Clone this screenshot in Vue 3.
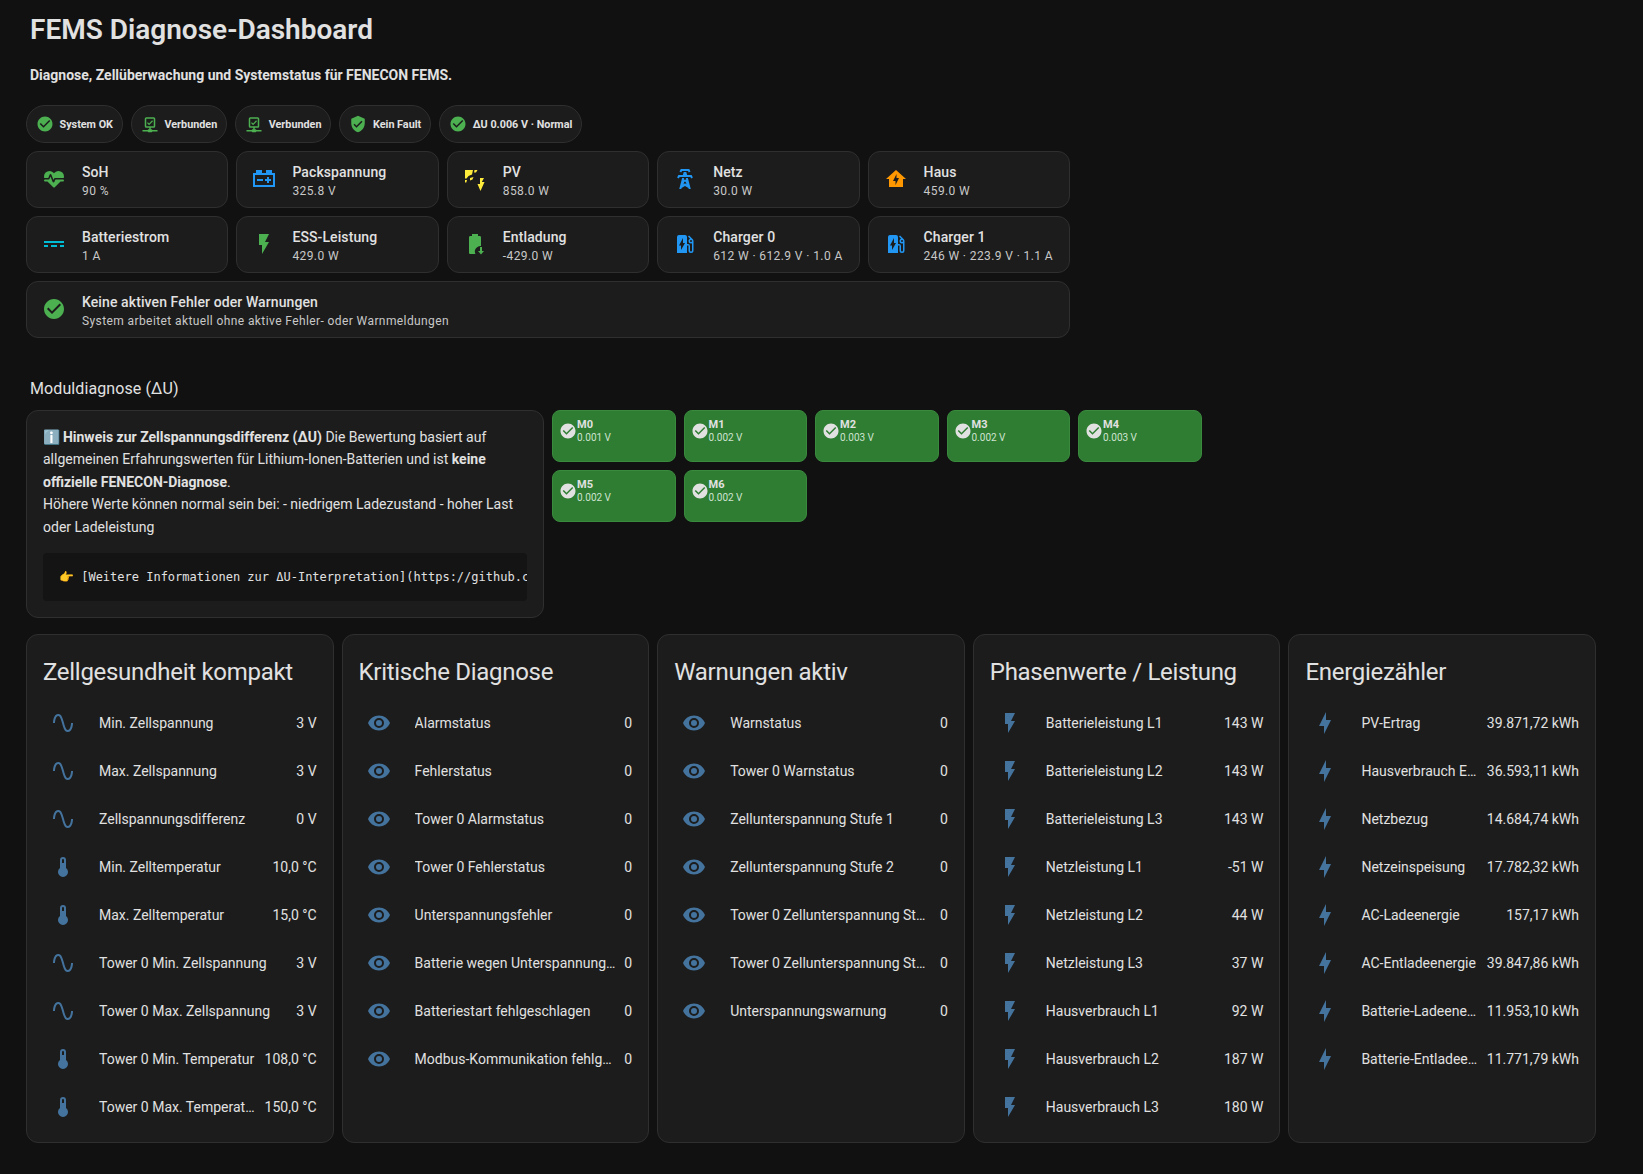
<script setup>
const P = {
  check: 'M12 2C6.5 2 2 6.5 2 12S6.5 22 12 22 22 17.5 22 12 17.5 2 12 2M10 17L5 12L6.41 10.59L10 14.17L17.59 6.58L19 8L10 17Z',
  shield: 'M10,17L6,13L7.41,11.59L10,14.17L16.59,7.58L18,9M12,1L3,5V11C3,16.55 6.84,21.74 12,23C17.16,21.74 21,16.55 21,11V5L12,1Z',
  net: 'M15,20A1,1 0 0,0 14,19H13V17H17A2,2 0 0,0 19,15V5A2,2 0 0,0 17,3H7A2,2 0 0,0 5,5V15A2,2 0 0,0 7,17H11V19H10A1,1 0 0,0 9,20H2V22H9A1,1 0 0,0 10,23H14A1,1 0 0,0 15,22H22V20H15M7,15V5H17V15H7M10.75,13.5L8,10.75L9.16,9.59L10.75,11.18L14.84,7.09L16,8.25L10.75,13.5Z',
  heart: 'M7.5,4A5.5,5.5 0 0,0 2,9.5C2,10 2.09,10.5 2.22,11H6.3L7.57,7.63C7.87,6.83 9.05,6.75 9.43,7.63L11.5,13L12.09,11.58C12.22,11.25 12.57,11 13,11H21.78C21.91,10.5 22,10 22,9.5A5.5,5.5 0 0,0 16.5,4C14.64,4 13,4.93 12,6.34C11,4.93 9.36,4 7.5,4V4M3,12.5A1,1 0 0,0 2,13.5A1,1 0 0,0 3,14.5H5.44L11,20C12,20.9 12,20.9 13,20L18.56,14.5H21A1,1 0 0,0 22,13.5A1,1 0 0,0 21,12.5H13.4L12.47,14.8C12.07,15.81 10.92,15.67 10.55,14.83L8.5,9.5L7.54,11.83C7.39,12.21 7.05,12.5 6.6,12.5H3Z',
  car: 'M4,3V6H1V20H23V6H20V3H14V6H10V3H4M3,8H21V18H3V8M15,10V12H13V14H15V16H17V14H19V12H17V10H15M5,12V14H11V12H5Z',
  solar: 'M2 3H10L9 7.5L5.5 9L3.5 11.5H2ZM11.5 3H14.5L13 5.5H11ZM2 13H4L3.3 15.5H2ZM7 11L10.5 10L9.5 12.5L7 13.5ZM17 11V17H14.5L17.5 24L21.5 15H18.8L21 11Z',
  tower: 'M8.28,5.45L6.5,4.55L7.76,2H16.23L17.5,4.55L15.72,5.44L15,4H9L8.28,5.45M18.62,8H14.09L13.3,5H10.7L9.91,8H5.38L4.1,10.55L5.89,11.44L6.62,10H17.38L18.1,11.45L19.89,10.56L18.62,8M17.77,22H15.7L15.46,21.06L12,18.92L8.55,21.06L8.3,22H6.23L9.12,11H11.19L10.83,12.35L12,13.07L13.18,12.35L12.82,11H14.89L17.77,22M11.1,15.17L10.57,17.21L12,16.32L13.43,17.21L12.9,15.17L12,14.62L11.1,15.17Z',
  home: 'M12 3L2 12H5V20H19V12H22L12 3M11.5 18V14H9L12.5 7V11H15L11.5 18Z',
  dc: 'M2,9H22V11H2V9M2,13H6V15H2V13M9,13H15V15H9V13M18,13H22V15H18V13Z',
  flash: 'M7,2V13H10V22L17,10H13L17,2H7Z',
  bolt: 'M11 15H6L13 1V9H18L11 23V15Z',
  batt: 'M16.67 4H15V2H9V4H7.33C6.6 4 6 4.6 6 5.33V20.67C6 21.4 6.6 22 7.33 22H12.5C12 21 11.6 19.5 12 18C12.7 15.8 15 14 18 14V5.33C18 4.6 17.4 4 16.67 4ZM17 15V19H15L18 22.5L21 19H19V15H17Z',
  ev: 'M19.77,7.23L19.78,7.22L16.06,3.5L15,4.56L17.11,6.67C16.17,7.03 15.5,7.93 15.5,9A2.5,2.5 0 0,0 18,11.5C18.36,11.5 18.69,11.42 19,11.29V18.5A1,1 0 0,1 18,19.5A1,1 0 0,1 17,18.5V14A2,2 0 0,0 15,12H14V5A2,2 0 0,0 12,3H6A2,2 0 0,0 4,5V21H14V13.5H15.5V18.5A2.5,2.5 0 0,0 18,21A2.5,2.5 0 0,0 20.5,18.5V9C20.5,8.31 20.22,7.68 19.77,7.23M18,10A1,1 0 0,1 17,9A1,1 0 0,1 18,8A1,1 0 0,1 19,9A1,1 0 0,1 18,10M8,18V13.5H6L10,6V11H12L8,18Z',
  sine: 'M16.5,21C13.5,21 12.31,16.76 11.05,12.28C10.14,9.04 9,5 7.5,5C4.11,5 4,11.93 4,12H2C2,11.63 2.06,3 7.5,3C10.5,3 11.71,7.25 12.97,11.74C13.83,14.8 15,19 16.5,19C19.94,19 20.03,12.07 20.03,12H22.03C22.03,12.37 21.97,21 16.5,21Z',
  therm: 'M15 13V5A3 3 0 0 0 9 5V13A5 5 0 1 0 15 13M12 4A1 1 0 0 1 13 5V8H11V5A1 1 0 0 1 12 4Z',
  eye: 'M12,9A3,3 0 0,0 9,12A3,3 0 0,0 12,15A3,3 0 0,0 15,12A3,3 0 0,0 12,9M12,17A5,5 0 0,1 7,12A5,5 0 0,1 12,7A5,5 0 0,1 17,12A5,5 0 0,1 12,17M12,4.5C7,4.5 2.73,7.61 1,12C2.73,16.39 7,19.5 12,19.5C17,19.5 21.27,16.39 23,12C21.27,7.61 17,4.5 12,4.5Z',
}

const chips = [
  { i: 'check', t: 'System OK' },
  { i: 'net', t: 'Verbunden' },
  { i: 'net', t: 'Verbunden' },
  { i: 'shield', t: 'Kein Fault' },
  { i: 'check', t: 'ΔU 0.006 V · Normal' },
]

const tiles = [
  { i: 'heart', c: 'green', t: 'SoH', s: '90 %' },
  { i: 'car', c: 'blue', t: 'Packspannung', s: '325.8 V' },
  { i: 'solar', c: 'yellow', t: 'PV', s: '858.0 W' },
  { i: 'tower', c: 'blue', t: 'Netz', s: '30.0 W' },
  { i: 'home', c: 'orange', t: 'Haus', s: '459.0 W' },
  { i: 'dc', c: 'cyan', t: 'Batteriestrom', s: '1 A' },
  { i: 'flash', c: 'green', t: 'ESS-Leistung', s: '429.0 W' },
  { i: 'batt', c: 'green', t: 'Entladung', s: '-429.0 W' },
  { i: 'ev', c: 'blue', t: 'Charger 0', s: '612 W · 612.9 V · 1.0 A' },
  { i: 'ev', c: 'blue', t: 'Charger 1', s: '246 W · 223.9 V · 1.1 A' },
]

const modules = [
  ['M0', '0.001 V'], ['M1', '0.002 V'], ['M2', '0.003 V'], ['M3', '0.002 V'],
  ['M4', '0.003 V'], ['M5', '0.002 V'], ['M6', '0.002 V'],
]

const cards = [
  { title: 'Zellgesundheit kompakt', rows: [
    ['sine', 'Min. Zellspannung', '3 V'],
    ['sine', 'Max. Zellspannung', '3 V'],
    ['sine', 'Zellspannungsdifferenz', '0 V'],
    ['therm', 'Min. Zelltemperatur', '10,0 °C'],
    ['therm', 'Max. Zelltemperatur', '15,0 °C'],
    ['sine', 'Tower 0 Min. Zellspannung', '3 V'],
    ['sine', 'Tower 0 Max. Zellspannung', '3 V'],
    ['therm', 'Tower 0 Min. Temperatur', '108,0 °C'],
    ['therm', 'Tower 0 Max. Temperatur', '150,0 °C'],
  ] },
  { title: 'Kritische Diagnose', rows: [
    ['eye', 'Alarmstatus', '0'],
    ['eye', 'Fehlerstatus', '0'],
    ['eye', 'Tower 0 Alarmstatus', '0'],
    ['eye', 'Tower 0 Fehlerstatus', '0'],
    ['eye', 'Unterspannungsfehler', '0'],
    ['eye', 'Batterie wegen Unterspannung gestoppt', '0'],
    ['eye', 'Batteriestart fehlgeschlagen', '0'],
    ['eye', 'Modbus-Kommunikation fehlgeschlagen', '0'],
  ] },
  { title: 'Warnungen aktiv', rows: [
    ['eye', 'Warnstatus', '0'],
    ['eye', 'Tower 0 Warnstatus', '0'],
    ['eye', 'Zellunterspannung Stufe 1', '0'],
    ['eye', 'Zellunterspannung Stufe 2', '0'],
    ['eye', 'Tower 0 Zellunterspannung Stufe 1', '0'],
    ['eye', 'Tower 0 Zellunterspannung Stufe 2', '0'],
    ['eye', 'Unterspannungswarnung', '0'],
  ] },
  { title: 'Phasenwerte / Leistung', rows: [
    ['flash', 'Batterieleistung L1', '143 W'],
    ['flash', 'Batterieleistung L2', '143 W'],
    ['flash', 'Batterieleistung L3', '143 W'],
    ['flash', 'Netzleistung L1', '-51 W'],
    ['flash', 'Netzleistung L2', '44 W'],
    ['flash', 'Netzleistung L3', '37 W'],
    ['flash', 'Hausverbrauch L1', '92 W'],
    ['flash', 'Hausverbrauch L2', '187 W'],
    ['flash', 'Hausverbrauch L3', '180 W'],
  ] },
  { title: 'Energiezähler', rows: [
    ['bolt', 'PV-Ertrag', '39.871,72 kWh'],
    ['bolt', 'Hausverbrauch Energie', '36.593,11 kWh'],
    ['bolt', 'Netzbezug', '14.684,74 kWh'],
    ['bolt', 'Netzeinspeisung', '17.782,32 kWh'],
    ['bolt', 'AC-Ladeenergie', '157,17 kWh'],
    ['bolt', 'AC-Entladeenergie', '39.847,86 kWh'],
    ['bolt', 'Batterie-Ladeenergie', '11.953,10 kWh'],
    ['bolt', 'Batterie-Entladeenergie', '11.771,79 kWh'],
  ] },
]
</script>

<template>
  <div class="page">
    <h1 class="h1">FEMS Diagnose-Dashboard</h1>
    <p class="sub"><strong>Diagnose, Zellüberwachung und Systemstatus für FENECON FEMS.</strong></p>

    <div class="top">
      <div class="chips">
        <div v-for="(c, n) in chips" :key="n" class="chip">
          <svg class="chip-ic green" viewBox="0 0 24 24"><path :d="P[c.i]" /></svg>
          <span>{{ c.t }}</span>
        </div>
      </div>

      <div class="tiles">
        <div v-for="t in tiles" :key="t.t" class="tile">
          <svg class="ic" :class="t.c" viewBox="0 0 24 24"><path :d="P[t.i]" /></svg>
          <div class="tile-text">
            <div class="tile-title">{{ t.t }}</div>
            <div class="tile-sub">{{ t.s }}</div>
          </div>
        </div>
      </div>

      <div class="tile">
        <svg class="ic green" viewBox="0 0 24 24"><path :d="P.check" /></svg>
        <div class="tile-text">
          <div class="tile-title">Keine aktiven Fehler oder Warnungen</div>
          <div class="tile-sub">System arbeitet aktuell ohne aktive Fehler- oder Warnmeldungen</div>
        </div>
      </div>
    </div>

    <h2 class="section">Moduldiagnose (ΔU)</h2>

    <div class="mod-row">
      <div class="note">
        <div class="note-text">
          <span class="emoji">ℹ️</span> <strong>Hinweis zur Zellspannungsdifferenz (ΔU)</strong> Die Bewertung basiert auf allgemeinen Erfahrungswerten für Lithium-Ionen-Batterien und ist <strong>keine offizielle FENECON-Diagnose</strong>.<br />Höhere Werte können normal sein bei: - niedrigem Ladezustand - hoher Last oder Ladeleistung
        </div>
        <pre class="code"><span class="emoji">👉</span> [Weitere Informationen zur ΔU-Interpretation](https://github.c</pre>
      </div>
      <div class="mods">
        <div v-for="m in modules" :key="m[0]" class="mod">
          <svg class="mod-ic" viewBox="0 0 24 24"><path :d="P.check" /></svg>
          <div>
            <div class="mod-name">{{ m[0] }}</div>
            <div class="mod-val">{{ m[1] }}</div>
          </div>
        </div>
      </div>
    </div>

    <div class="cards">
      <section v-for="c in cards" :key="c.title" class="card">
        <h3 class="card-title">{{ c.title }}</h3>
        <div class="rows">
          <div v-for="r in c.rows" :key="r[1]" class="row">
            <span class="row-ic"><svg viewBox="0 0 24 24"><path :d="P[r[0]]" /></svg></span>
            <span class="row-name">{{ r[1] }}</span>
            <span class="row-val">{{ r[2] }}</span>
          </div>
        </div>
      </section>
    </div>
  </div>
</template>

<style>
html, body { background: #111111; }
</style>

<style scoped>
.page {
  box-sizing: border-box;
  width: 1643px;
  height: 1174px;
  overflow: hidden;
  padding: 12px 47px 0 26px;
  background: #111111;
  color: #e1e1e1;
  font-family: Roboto, "Noto Sans", sans-serif;
  font-size: 14px;
}
svg { display: block; fill: currentColor; }
.green { color: #4caf50; }
.blue { color: #2196f3; }
.yellow { color: #ffeb3b; }
.orange { color: #ff9800; }
.cyan { color: #00bcd4; }

.h1 { margin: 0 0 0 4px; font-size: 28px; line-height: 36px; font-weight: 600; }
.sub { margin: 17px 0 0 4px; font-size: 14px; line-height: 20px; }
.sub strong { font-weight: 700; }

.top { display: flex; flex-direction: column; gap: 8px; width: 1044px; margin-top: 20px; }
.chips { display: flex; gap: 8px; }
.chip {
  box-sizing: border-box;
  height: 38px;
  display: flex;
  align-items: center;
  gap: 5.5px;
  padding: 0 9px;
  border: 1px solid #2f2f2f;
  border-radius: 19px;
  background: #1c1c1c;
  font-size: 10.8px;
  font-weight: 700;
}
.chip-ic { width: 18px; height: 18px; flex: none; }

.tiles { display: grid; grid-template-columns: repeat(5, minmax(0, 1fr)); gap: 8px; }
.tile {
  box-sizing: border-box;
  height: 57px;
  display: flex;
  align-items: center;
  gap: 16px;
  padding: 0 16px;
  border: 1px solid #2f2f2f;
  border-radius: 12px;
  background: #1c1c1c;
}
.ic { width: 24px; height: 24px; flex: none; margin: -1px 0 0 -1px; }
.tile-text { min-width: 0; padding-top: 3px; }
.tile-title { font-size: 14px; line-height: 20px; font-weight: 500; letter-spacing: 0.1px; white-space: nowrap; }
.tile-sub { font-size: 12px; line-height: 18px; letter-spacing: 0.4px; color: #c8c8c8; white-space: nowrap; }

.section { margin: 41px 0 0 4px; font-size: 16px; line-height: 20px; font-weight: 400; letter-spacing: 0.1px; }

.mod-row { display: flex; gap: 8px; align-items: flex-start; margin-top: 11px; }
.note {
  box-sizing: border-box;
  width: 518px;
  height: 208px;
  padding: 15px 16px 16px;
  border: 1px solid #2f2f2f;
  border-radius: 12px;
  background: #1c1c1c;
}
.note-text { font-size: 14px; line-height: 22.4px; }
.note-text strong { font-weight: 700; }
.note-text .emoji { margin-right: -1px; }
.emoji { font-family: "Noto Color Emoji", sans-serif; }
.code {
  height: 48px;
  box-sizing: border-box;
  margin: 15px 0 0;
  padding: 16px 0 0 16px;
  overflow: hidden;
  border-radius: 4px;
  background: #141414;
  font-family: "DejaVu Sans Mono", monospace;
  font-size: 12px;
  line-height: 16px;
  white-space: pre;
}

.mods { display: grid; grid-template-columns: repeat(5, 123.5px); gap: 8px; }
.mod {
  box-sizing: border-box;
  height: 52px;
  display: flex;
  align-items: flex-start;
  padding: 7px 0 0 6px;
  border: 1px solid #3a8a3e;
  border-radius: 8px;
  background: #2e7d32;
  color: #e1e1e1;
}
.mod-ic { width: 18px; height: 18px; flex: none; margin-top: 4px; }
.mod-name { font-size: 11px; line-height: 13px; font-weight: 700; }
.mod-val { font-size: 10px; line-height: 13px; color: #cfe3d0; }

.cards { display: grid; grid-template-columns: repeat(5, minmax(0, 1fr)); gap: 8px; margin-top: 16px; }
.card {
  box-sizing: border-box;
  height: 509px;
  padding: 0 16px;
  border: 1px solid #2f2f2f;
  border-radius: 12px;
  background: #1c1c1c;
}
.card-title { margin: 23px 0 0; font-size: 24px; line-height: 28px; font-weight: 400; letter-spacing: -0.012em; white-space: nowrap; }
.rows { display: flex; flex-direction: column; gap: 8px; margin-top: 17px; }
.row { height: 40px; display: flex; align-items: center; min-width: 0; }
.row-ic { width: 40px; flex: none; display: flex; justify-content: center; color: #44739e; }
.row-ic svg { width: 24px; height: 24px; }
.row-name {
  flex: 1;
  min-width: 0;
  margin-left: 16px;
  overflow: hidden;
  text-overflow: ellipsis;
  white-space: nowrap;
}
.row-val { flex: none; margin-left: 8px; white-space: nowrap; }
</style>
